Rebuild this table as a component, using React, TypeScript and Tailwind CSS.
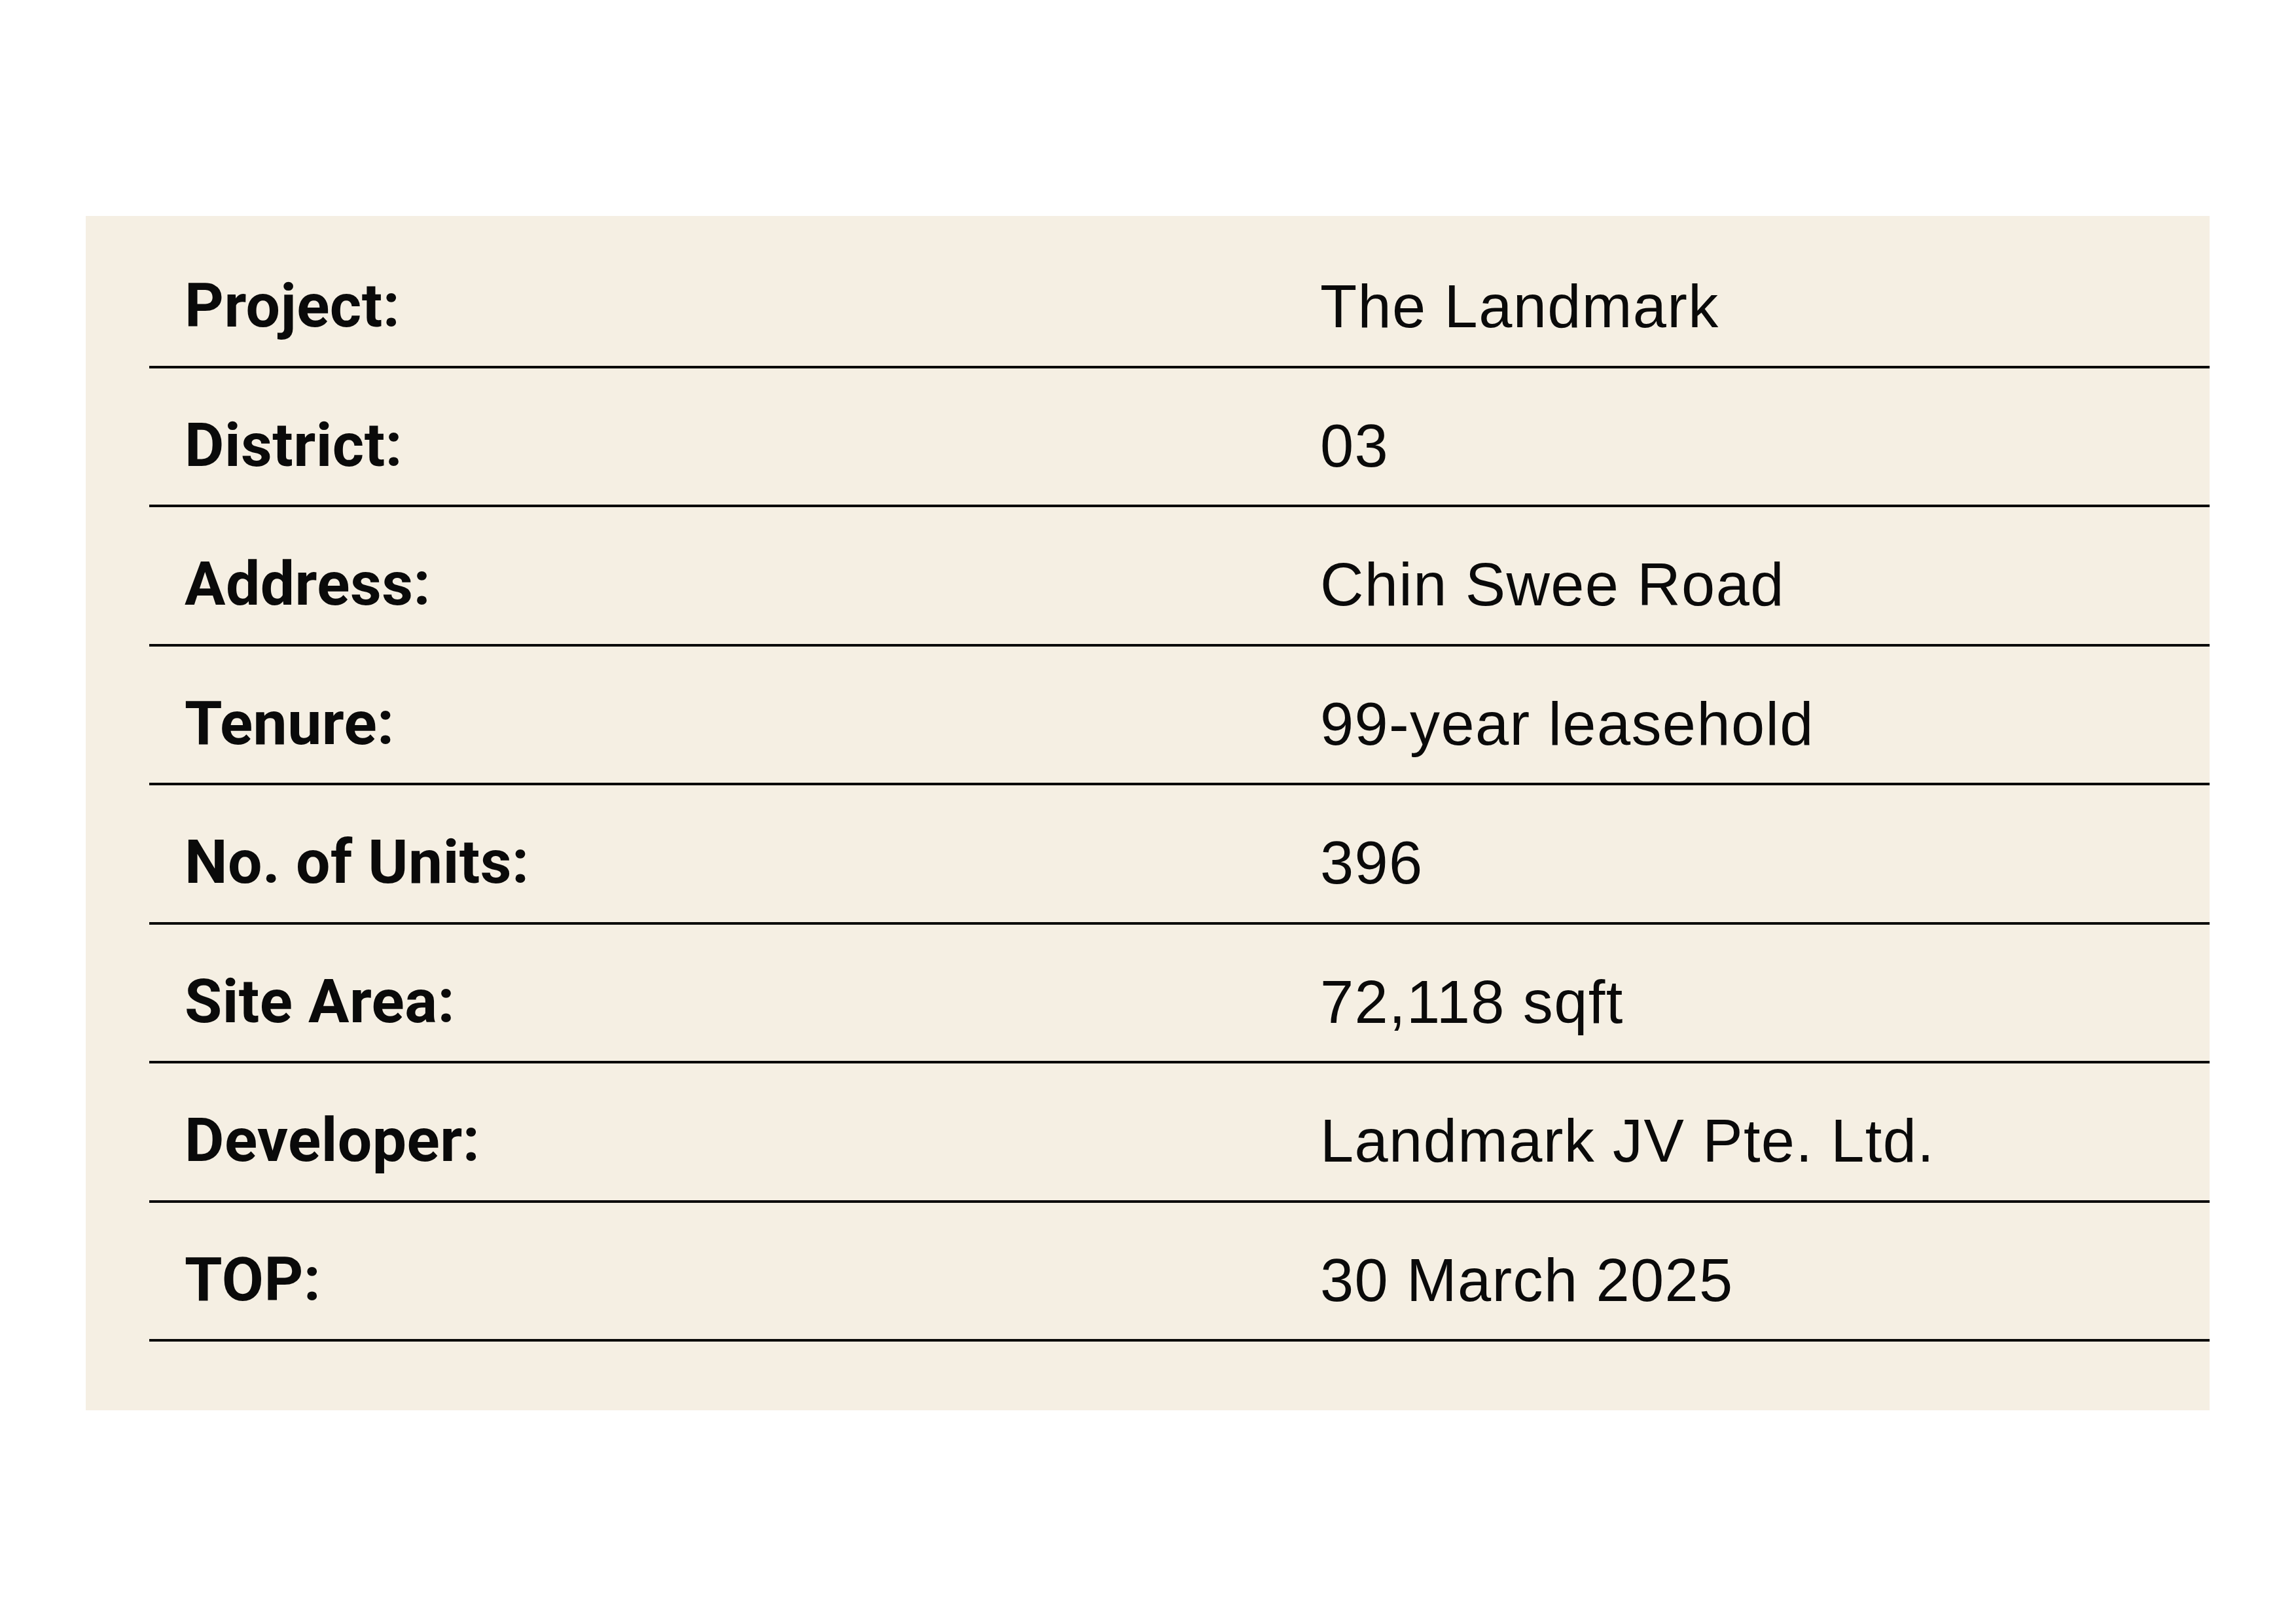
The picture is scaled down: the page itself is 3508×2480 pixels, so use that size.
const details: { label: string; value: string }[] = [
  { label: 'Project:', value: 'The Landmark' },
  { label: 'District:', value: '03' },
  { label: 'Address:', value: 'Chin Swee Road' },
  { label: 'Tenure:', value: '99-year leasehold' },
  { label: 'No. of Units:', value: '396' },
  { label: 'Site Area:', value: '72,118 sqft' },
  { label: 'Developer:', value: 'Landmark JV Pte. Ltd.' },
  { label: 'TOP:', value: '30 March 2025' },
];

export default function App() {
  return (
    <div className="min-h-screen w-full bg-white pt-[330px] pl-[131px]">
      <div className="w-[3245px] bg-[#f5efe3] pt-[20px] pb-[105px] pl-[97px]">
        {details.map((row) => (
          <div
            key={row.label}
            className="grid h-[212.5px] grid-cols-[1789px_1fr] items-start border-b-4 border-[#0a0a0a] pt-[72px] text-[92px] leading-[92px] text-[#0a0a0a]"
          >
            <div className="pl-[54px] font-['Roboto',sans-serif] text-[93px] leading-[92px] font-bold tracking-[0.005em]">
              {row.label}
            </div>
            <div className="font-['Liberation_Sans',Arial,sans-serif] tracking-[0.015em]">
              {row.value}
            </div>
          </div>
        ))}
      </div>
    </div>
  );
}
